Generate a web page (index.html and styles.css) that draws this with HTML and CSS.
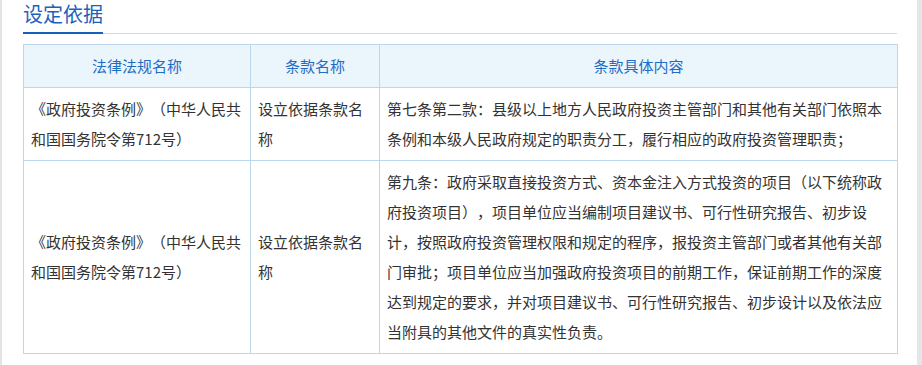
FILE: index.html
```html
<!DOCTYPE html>
<html lang="zh-CN">
<head>
<meta charset="utf-8">
<title>设定依据</title>
<link rel="stylesheet" href="styles.css">
</head>
<body>
<div class="frame">
  <div class="section">
    <div class="section-head"><span class="section-title">设定依据</span></div>
    <table class="basis">
      <colgroup>
        <col class="c1"><col class="c2"><col class="c3">
      </colgroup>
      <thead>
        <tr><th>法律法规名称</th><th>条款名称</th><th>条款具体内容</th></tr>
      </thead>
      <tbody>
        <tr>
          <td>《政府投资条例》（中华人民共和国国务院令第712号）</td>
          <td>设立依据条款名称</td>
          <td>第七条第二款：县级以上地方人民政府投资主管部门和其他有关部门依照本条例和本级人民政府规定的职责分工，履行相应的政府投资管理职责；</td>
        </tr>
        <tr>
          <td>《政府投资条例》（中华人民共和国国务院令第712号）</td>
          <td>设立依据条款名称</td>
          <td>第九条：政府采取直接投资方式、资本金注入方式投资的项目（以下统称政府投资项目），项目单位应当编制项目建议书、可行性研究报告、初步设计，按照政府投资管理权限和规定的程序，报投资主管部门或者其他有关部门审批；项目单位应当加强政府投资项目的前期工作，保证前期工作的深度达到规定的要求，并对项目建议书、可行性研究报告、初步设计以及依法应当附具的其他文件的真实性负责。</td>
        </tr>
      </tbody>
    </table>
  </div>
</div>
</body>
</html>
```
FILE: styles.css
```css
html, body {
  margin: 0;
  padding: 0;
  background: #ffffff;
}
body {
  font-family: "Noto Sans CJK SC", "Microsoft YaHei", sans-serif;
  color: #333333;
  text-spacing-trim: space-all;
  font-feature-settings: "chws" 0, "halt" 0;
}
.frame {
  box-sizing: border-box;
  width: 922px;
  height: 365px;
  border-left: 2px solid #e3e3e3;
  border-right: 5px solid #e6e6e6;
  padding-left: 21px;
  overflow: hidden;
}
.section {
  width: 874px;
}
.section-head {
  border-bottom: 1px solid #d8d8d8;
  height: 33px;
}
.section-title {
  display: inline-block;
  font-size: 20px;
  line-height: 28px;
  padding-bottom: 4px;
  color: #1a62bd;
  border-bottom: 2px solid #1560bd;
}
.basis {
  margin-top: 10px;
  width: 874px;
  table-layout: fixed;
  border-collapse: collapse;
  font-size: 15px;
  line-height: 30px;
}
.c1 { width: 227px; }
.c2 { width: 129px; }
.c3 { width: 518px; }
.basis th,
.basis td {
  border: 1px solid #bcd6ec;
  padding: 6px 7px;
  vertical-align: middle;
  text-align: left;
}
.basis th {
  background: #eaf5fc;
  color: #1f6cc6;
  font-weight: normal;
  text-align: center;
}
.basis td {
  color: #333333;
}
```
